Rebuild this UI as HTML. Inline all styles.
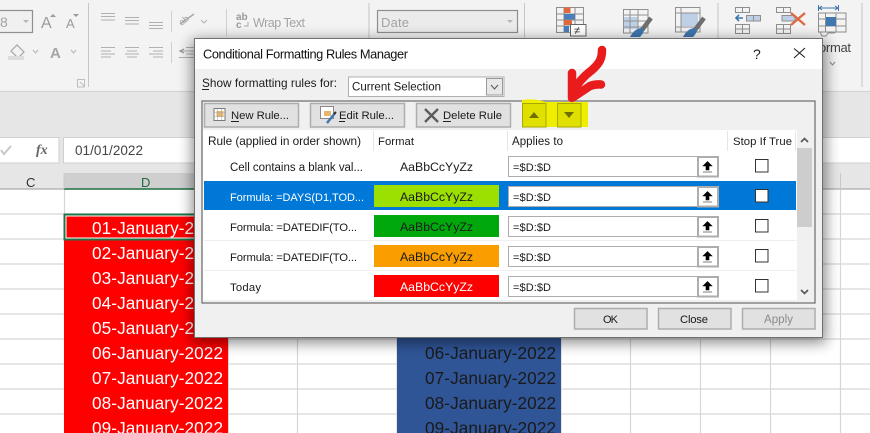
<!DOCTYPE html>
<html><head><meta charset="utf-8"><title>Conditional Formatting Rules Manager</title>
<style>
html,body{margin:0;padding:0;background:#fff;width:870px;height:433px;overflow:hidden}
svg{display:block}
text{font-family:"Liberation Sans",Arial,sans-serif;font-size:11.8px;fill:#1a1a1a;white-space:pre}
.s{font-size:17.2px}
.g{fill:#a3a3a3;font-size:12.5px}
.a{font-size:11px}
.m{font-size:11.3px}
.n{font-size:11.5px}
.z{font-size:12.3px}
.b{fill:#e1e1e1;stroke:#adadad;stroke-width:1.5}
</style></head><body>
<svg width="870" height="433" viewBox="0 0 870 433" xmlns="http://www.w3.org/2000/svg">
<defs><filter id="sh" x="-10%" y="-15%" width="120%" height="130%"><feGaussianBlur stdDeviation="7"/></filter></defs>

<!-- sheet grid -->
<rect width="870" height="433" fill="#fff"/>
<g stroke="#d6d6d6" stroke-width="1.2">
<path d="M0 214H870M0 239H870M0 264H870M0 289H870M0 314H870M0 339H870M0 364H870M0 389H870M0 414H870"/>
<path d="M64.5 189V433M228.5 189V433M297.5 189V433M397 189V433M561 189V433M630.5 189V433M700.5 189V433M770.5 189V433M840.5 189V433"/>
</g>
<rect x="64" y="214" width="164" height="219" fill="#f00"/>
<rect x="397" y="320" width="164" height="113" fill="#2f5597"/>
<text class="s" x="92" y="234" textLength="131" style="fill:#fff">01-January-2022</text>
<text class="s" x="92" y="259" textLength="131" style="fill:#fff">02-January-2022</text>
<text class="s" x="92" y="284" textLength="131" style="fill:#fff">03-January-2022</text>
<text class="s" x="92" y="309" textLength="131" style="fill:#fff">04-January-2022</text>
<text class="s" x="92" y="334" textLength="131" style="fill:#fff">05-January-2022</text>
<text class="s" x="92" y="359" textLength="131" style="fill:#fff">06-January-2022</text>
<text class="s" x="92" y="384" textLength="131" style="fill:#fff">07-January-2022</text>
<text class="s" x="92" y="409" textLength="131" style="fill:#fff">08-January-2022</text>
<text class="s" x="92" y="434" textLength="131" style="fill:#fff">09-January-2022</text>
<text class="s" x="425" y="359" textLength="131">06-January-2022</text>
<text class="s" x="425" y="384" textLength="131">07-January-2022</text>
<text class="s" x="425" y="409" textLength="131">08-January-2022</text>
<text class="s" x="425" y="434" textLength="131">09-January-2022</text>
<rect x="64.5" y="214.5" width="170" height="25" fill="none" stroke="#217346" stroke-width="2"/>
<rect x="66" y="216" width="170" height="22" fill="none" stroke="#fff" stroke-width="1"/>

<!-- headers -->
<rect y="92" width="870" height="97" fill="#e6e6e6"/>
<rect x="64" y="173" width="164" height="16" fill="#cfcfcf"/>
<path d="M0 189H870" stroke="#ababab" stroke-width="1.2"/>
<path d="M64 189H228" stroke="#217346" stroke-width="1.6"/>
<path d="M64 173V189M228.5 173V189M297.5 173V189M397 173V189M561 173V189M630.5 173V189M700.5 173V189M770.5 173V189M840.5 173V189" stroke="#c8c8c8"/>
<text x="26" y="187" style="fill:#333;font-size:13px">C</text>
<text x="141" y="187" style="fill:#1f6b42;font-size:13px">D</text>
<!-- formula bar -->
<rect x="-2" y="137.5" width="61" height="25.5" fill="#fff" stroke="#d0d0d0"/>
<rect x="63.5" y="137.5" width="850" height="25.5" fill="#fff" stroke="#d0d0d0"/>
<path d="M1 150L4 154L11 146" fill="none" stroke="#c8c8c8" stroke-width="2"/>
<text x="36" y="154" style="font-family:'Liberation Serif',serif;font-style:italic;font-weight:bold;fill:#666;font-size:14px">fx</text>
<text x="75" y="155" textLength="68" style="font-size:13.5px;fill:#444">01/01/2022</text>

<!-- ribbon -->
<rect width="870" height="91" fill="#f3f3f3"/>
<path d="M0 91.5H870" stroke="#d4d4d4" stroke-width="1.2"/>
<path d="M88.5 3V87M369 3V87M524.5 3V40M718 3V40M862 3V87" stroke="#c6c6c6" stroke-width="1"/>
<path d="M171.5 11V32M171.5 42V63M226.5 9V36" stroke="#d0d0d0"/>
<rect x="-4" y="10.500" width="36.500" height="22" fill="#f0f0f0" stroke="#8f8f8f" stroke-width="1.2"/>
<text x="0" y="27" class="g" style="font-size:14px">8</text>
<path d="M23 20H29L26 23Z" fill="#b5b5b5"/>
<text x="41" y="28" style="font-size:16px;fill:#9a9a9a">A</text><path d="M50 17L53 14L56 17Z" fill="#9a9a9a"/>
<text x="66" y="28" style="font-size:13px;fill:#9a9a9a">A</text><path d="M73 14H79L76 17Z" fill="#9a9a9a"/>
<g stroke="#b0b0b0" stroke-width="1">
<path d="M101 13.500H115M101 16.500H115M101 20H115"/>
<path d="M125 17.500H139M125 20.500H139M125 24H139"/>
<path d="M149 22.500H163M149 25.500H163M149 28.500H163"/>
<path d="M101 47.500H115M101 51H111M101 54H115M101 57H111"/>
<path d="M125 47.500H139M127 51H137M125 54H139M127 57H137"/>
<path d="M149 47.500H163M153 51H163M149 54H163M153 57H163"/>
</g>
<path d="M180 24L194 14" stroke="#a8a8a8" stroke-width="1.5"/>
<text x="179" y="22" transform="rotate(-38 186 20)" style="font-size:9px;fill:#a0a0a0">ab</text>
<path d="M201 20L204 23L207 20M33 50L35.500 53L38 50M71 50L73.500 53L76 50" fill="none" stroke="#b5b5b5"/>
<path d="M179 51H195M186 47.500H195M186 54H195M179 57.500H195" stroke="#b0b0b0"/>
<path d="M184 49L180 51L184 53" fill="none" stroke="#909090"/>
<path d="M11 51L17 45L24 52L18 58Z" fill="none" stroke="#a5a5a5" stroke-width="1.2"/>
<rect x="8" y="56" width="16" height="4" fill="#dcdcdc"/>
<text x="50" y="58" style="font-size:15px;font-weight:bold;fill:#a5a5a5">A</text>
<path d="M77.500 79.500H84.500V87H77.500Z" fill="none" stroke="#bdbdbd"/><path d="M80 82L84 86" stroke="#bdbdbd"/>
<text x="236" y="20" style="font-size:10px;fill:#999;font-weight:bold">ab</text>
<text x="236" y="28" style="font-size:10px;fill:#999;font-weight:bold">c</text>
<path d="M248 22V26H244" fill="none" stroke="#aaa"/>
<text class="g" x="253" y="27" textLength="52">Wrap Text</text>
<rect x="377.500" y="10.500" width="140" height="22" fill="#ebebeb" stroke="#8f8f8f" stroke-width="1.2"/>
<text class="g" x="381" y="27" textLength="28" style="font-size:13px">Date</text>
<path d="M507 20H513L510 23Z" fill="#b5b5b5"/>

<!-- cond format icon -->
<g>
<path d="M556.500 7.500H583.500V32.500H556.500ZM556.500 14H583.500M556.500 20H583.500M556.500 26H583.500M564 7.500V32.500M575 7.500V32.500" fill="none" stroke="#8e8e8e"/>
<rect x="564" y="7.500" width="6.500" height="5.500" fill="#e0683f"/>
<rect x="564" y="14" width="11" height="5.500" fill="#4a7ebb"/>
<rect x="564" y="20" width="8" height="5" fill="#e0683f"/>
<rect x="564" y="26" width="5" height="6" fill="#4a7ebb"/>
<rect x="570.500" y="24.500" width="15.500" height="11.500" fill="#fff" stroke="#666"/>
<text x="574" y="34" style="font-size:11px;fill:#333">≠</text>
</g>
<!-- format as table -->
<g>
<rect x="624" y="17" width="14" height="12" fill="#bdd0e6"/>
<path d="M623.500 9.500H648V33H623.500ZM623.500 15H648M623.500 21H648M623.500 27H648M630 9.500V33M638 9.500V33" fill="none" stroke="#909090"/>
<path d="M642 30L651 18" stroke="#6e6e6e" stroke-width="4.500"/>
<path d="M630 37C632 33 636 28 642 28C646 30 642 35 640 37Z" fill="#3f77b0"/>
</g>
<!-- cell styles -->
<g>
<rect x="681" y="13" width="17" height="13" fill="#bdd0e6"/>
<path d="M675.500 7.500H700V32H675.500ZM675.500 13H700M681 7.500V32M675.500 27H700" fill="none" stroke="#909090"/>
<path d="M695 30L704 18" stroke="#6e6e6e" stroke-width="4.500"/>
<path d="M683 37C685 33 689 28 695 28C699 30 695 35 693 37Z" fill="#3f77b0"/>
</g>
<!-- insert -->
<g fill="none" stroke="#8e8e8e">
<path d="M735.500 7.500H749.500V12.500H735.500ZM742.500 7.500V12.500M735.500 24.500H749.500V33.500H735.500ZM735.500 29H749.500M742.500 24.500V33.500"/>
<rect x="746.500" y="15.500" width="14" height="5.500" fill="#bdd0e6"/><path d="M753.500 15.500V21"/>
<path d="M743 18H736M739 15L736 18L739 21" stroke="#3f77b0" stroke-width="1.6"/>
</g>
<!-- delete -->
<g fill="none" stroke="#8e8e8e">
<path d="M776.500 7.500H790.500V12.500H776.500ZM783.500 7.500V12.500M776.500 24.500H790.500V33.500H776.500ZM776.500 29H790.500M783.500 24.500V33.500"/>
<rect x="782" y="15.500" width="13" height="5.500" fill="#bdd0e6"/>
<path d="M791 13L805 25M805 13L791 25" stroke="#e0683f" stroke-width="2.300"/>
</g>
<!-- format -->
<g fill="none">
<path d="M819 8H838M819 8L822 6M819 8L822 10M838 8L835 6M838 8L835 10M818.500 5V11M838.500 5V11" stroke="#3f77b0"/>
<path d="M818.500 13H846V32H818.500ZM818.500 19H846M818.500 26H846M825.500 13V32M836 13V32" stroke="#8e8e8e"/>
<rect x="826" y="17" width="10" height="9" fill="#3f77b0"/>
<path d="M820 32L822 36H826L828 33L834 33L836 32" stroke="#8e8e8e"/>
</g>
<text x="819" y="52" textLength="32" style="font-size:13px;fill:#444">ormat</text>
<path d="M830 62L832.500 65L835 62" fill="none" stroke="#888"/>

<!-- dialog shadow -->
<rect x="192" y="40" width="634" height="303" fill="#000" opacity=".45" filter="url(#sh)"/>
<!-- dialog -->
<rect x="194.500" y="38.500" width="628" height="299" fill="#f0f0f0" stroke="#707070"/>
<rect x="195" y="39" width="627" height="30" fill="#fff"/>
<text x="203" y="58.500" textLength="205" style="font-size:12.8px;fill:#111">Conditional Formatting Rules Manager</text>
<text x="753" y="59" style="font-size:14px;fill:#222">?</text>
<path d="M794 48.500L805 57.500M805 48L794 58" stroke="#222" stroke-width="1.100"/>

<text x="202" y="87" textLength="135">Show formatting rules for:</text>
<path d="M202 89.500H209" stroke="#222"/>
<rect x="348.500" y="77" width="155.500" height="19.500" fill="#fff" stroke="#b0b0b0"/>
<text x="352" y="90.500" textLength="89" class="n">Current Selection</text>
<rect x="486.500" y="78.500" width="16" height="16.500" fill="#e8e8e8" stroke="#9a9a9a"/>
<path d="M491 85L494.500 89L498 85" fill="none" stroke="#555"/>

<!-- inner panel -->
<rect x="202" y="101" width="613" height="202" fill="#f0f0f0" stroke="#757575" stroke-width="1.300"/>
<rect x="204.500" y="103.500" width="94" height="23.500" class="b"/>
<rect x="310.500" y="103.500" width="94" height="23.500" class="b"/>
<rect x="416.500" y="103.500" width="94" height="23.500" class="b"/>
<!-- new rule icon -->
<rect x="214" y="108.500" width="11" height="12" fill="#fff" stroke="#777"/><rect x="216.500" y="111" width="7" height="6" fill="#e8b668"/>
<path d="M214 112.500H225M214 116.500H225M217.500 108.500V120.500M221.500 108.500V120.500" stroke="#aaa" stroke-width=".6"/>
<text x="231" y="119" textLength="58" class="m">New Rule...</text>
<path d="M231 121.500H239" stroke="#222"/>
<!-- edit rule icon -->
<rect x="320.500" y="106.500" width="13" height="12" fill="#fff" stroke="#888"/><rect x="324" y="111" width="7" height="5" fill="#e8b668"/>
<path d="M327 123L335 113" stroke="#3f77b0" stroke-width="2.500"/><path d="M334 114L336 112" stroke="#333" stroke-width="2"/>
<text x="339" y="119" textLength="55" class="m">Edit Rule...</text>
<path d="M339 121.500H345" stroke="#222"/>
<!-- delete icon -->
<path d="M425 109L438 122M438 109L425 122" stroke="#5c5c5c" stroke-width="2.300"/>
<text x="443" y="119" textLength="59" class="m">Delete Rule</text>
<path d="M443 121.500H451" stroke="#222"/>
<!-- yellow -->
<path d="M522 100Q534 98 546 102H588V127H522Z" fill="#f0ee00"/>
<rect x="522.500" y="103.500" width="23.500" height="23.500" fill="#e0e000" stroke="#a8a800"/>
<rect x="557.500" y="103.500" width="23.500" height="23.500" fill="#e0e000" stroke="#a8a800"/>
<path d="M529 118H539L534 112Z" fill="#6f6f00"/>
<path d="M564 112H574L569 118Z" fill="#6f6f00"/>

<!-- list -->
<rect x="203" y="130" width="609" height="171" fill="#fff"/>
<path d="M373.500 131V151M507.500 131V151M727.500 131V151M795.500 131V151" stroke="#e5e5e5"/>
<text x="208" y="145" textLength="153">Rule (applied in order shown)</text>
<text x="378" y="145" textLength="36" class="m">Format</text>
<text x="512" y="145" textLength="51" class="n">Applies to</text>
<text x="733" y="145" textLength="59" class="m">Stop If True</text>

<rect x="204" y="181" width="592" height="29" fill="#0078d7"/>
<path d="M204 240.500H796M204 270.500H796M204 300.500H796" stroke="#efefef"/>

<rect x="374" y="185" width="125" height="22" fill="#9be000"/>
<rect x="374" y="215" width="125" height="22" fill="#00a80c"/>
<rect x="374" y="245" width="125" height="22" fill="#fa9e00"/>
<rect x="374" y="275" width="125" height="22" fill="#f00"/>

<text x="230" y="171" textLength="133" class="n">Cell contains a blank val...</text>
<text x="230" y="201" textLength="134" class="a" style="fill:#fff">Formula: =DAYS(D1,TOD...</text>
<text x="230" y="231" textLength="127" class="m">Formula: =DATEDIF(TO...</text>
<text x="230" y="261" textLength="127" class="m">Formula: =DATEDIF(TO...</text>
<text x="230" y="291" textLength="31" class="m">Today</text>

<text x="400" y="171" textLength="73" class="z">AaBbCcYyZz</text>
<text x="400" y="201" textLength="73" class="z">AaBbCcYyZz</text>
<text x="400" y="231" textLength="73" class="z">AaBbCcYyZz</text>
<text x="400" y="261" textLength="73" class="z">AaBbCcYyZz</text>
<text x="400" y="291" textLength="73" class="z" style="fill:#fff">AaBbCcYyZz</text>

<!-- applies boxes -->
<g>
<rect x="508.500" y="156.500" width="189" height="20" fill="#fff" stroke="#adadad"/>
<rect x="698" y="157" width="20" height="19.500" fill="#fff" stroke="#adadad" stroke-width="2"/>
<path d="M703 166L707.500 161.500L712 166H709V170H706V166ZM703 172H712" fill="#000" stroke="#000" stroke-width=".6"/>
<text x="513" y="171" textLength="38" class="a">=$D:$D</text>
<rect x="755.500" y="159.500" width="12.500" height="12.500" fill="#fff" stroke="#333"/>
</g>
<g transform="translate(0,30)">
<rect x="508.500" y="156.500" width="189" height="20" fill="#fff" stroke="#adadad"/>
<rect x="698" y="157" width="20" height="19.500" fill="#fff" stroke="#adadad" stroke-width="2"/>
<path d="M703 166L707.500 161.500L712 166H709V170H706V166ZM703 172H712" fill="#000" stroke="#000" stroke-width=".6"/>
<text x="513" y="171" textLength="38" class="a">=$D:$D</text>
<rect x="755.500" y="159.500" width="12.500" height="12.500" fill="#fff" stroke="#333"/>
</g>
<g transform="translate(0,60)">
<rect x="508.500" y="156.500" width="189" height="20" fill="#fff" stroke="#adadad"/>
<rect x="698" y="157" width="20" height="19.500" fill="#fff" stroke="#adadad" stroke-width="2"/>
<path d="M703 166L707.500 161.500L712 166H709V170H706V166ZM703 172H712" fill="#000" stroke="#000" stroke-width=".6"/>
<text x="513" y="171" textLength="38" class="a">=$D:$D</text>
<rect x="755.500" y="159.500" width="12.500" height="12.500" fill="#fff" stroke="#333"/>
</g>
<g transform="translate(0,90)">
<rect x="508.500" y="156.500" width="189" height="20" fill="#fff" stroke="#adadad"/>
<rect x="698" y="157" width="20" height="19.500" fill="#fff" stroke="#adadad" stroke-width="2"/>
<path d="M703 166L707.500 161.500L712 166H709V170H706V166ZM703 172H712" fill="#000" stroke="#000" stroke-width=".6"/>
<text x="513" y="171" textLength="38" class="a">=$D:$D</text>
<rect x="755.500" y="159.500" width="12.500" height="12.500" fill="#fff" stroke="#333"/>
</g>
<g transform="translate(0,120)">
<rect x="508.500" y="156.500" width="189" height="20" fill="#fff" stroke="#adadad"/>
<rect x="698" y="157" width="20" height="19.500" fill="#fff" stroke="#adadad" stroke-width="2"/>
<path d="M703 166L707.500 161.500L712 166H709V170H706V166ZM703 172H712" fill="#000" stroke="#000" stroke-width=".6"/>
<text x="513" y="171" textLength="38" class="a">=$D:$D</text>
<rect x="755.500" y="159.500" width="12.500" height="12.500" fill="#fff" stroke="#333"/>
</g>

<!-- scrollbar -->
<rect x="797" y="130" width="15" height="171" fill="#f0f0f0"/>
<rect x="797" y="148" width="15" height="79" fill="#cdcdcd"/>
<path d="M801 142L804.500 138.500L808 142M801 290L804.500 293.500L808 290" fill="none" stroke="#555" stroke-width="1.600"/>

<!-- bottom buttons -->
<rect x="574.500" y="308.500" width="72.500" height="20.500" class="b"/>
<rect x="658.500" y="308.500" width="72.500" height="20.500" class="b"/>
<rect x="742.500" y="308.500" width="72.500" height="20.500" class="b"/>
<text x="603" y="323" textLength="15" class="a">OK</text>
<text x="680" y="323" textLength="28" class="m">Close</text>
<text x="764" y="323" textLength="29" class="n" style="fill:#8a8a8a">Apply</text>

<!-- red arrow -->
<path d="M602 50C602 58 600 63 592 70C584 76 577 84 573 92M572 73V98L590 86Q595 84 601 84.500" fill="none" stroke="#e81c1c" stroke-width="8.500" stroke-linecap="round" stroke-linejoin="round"/>
</svg>
</body></html>
